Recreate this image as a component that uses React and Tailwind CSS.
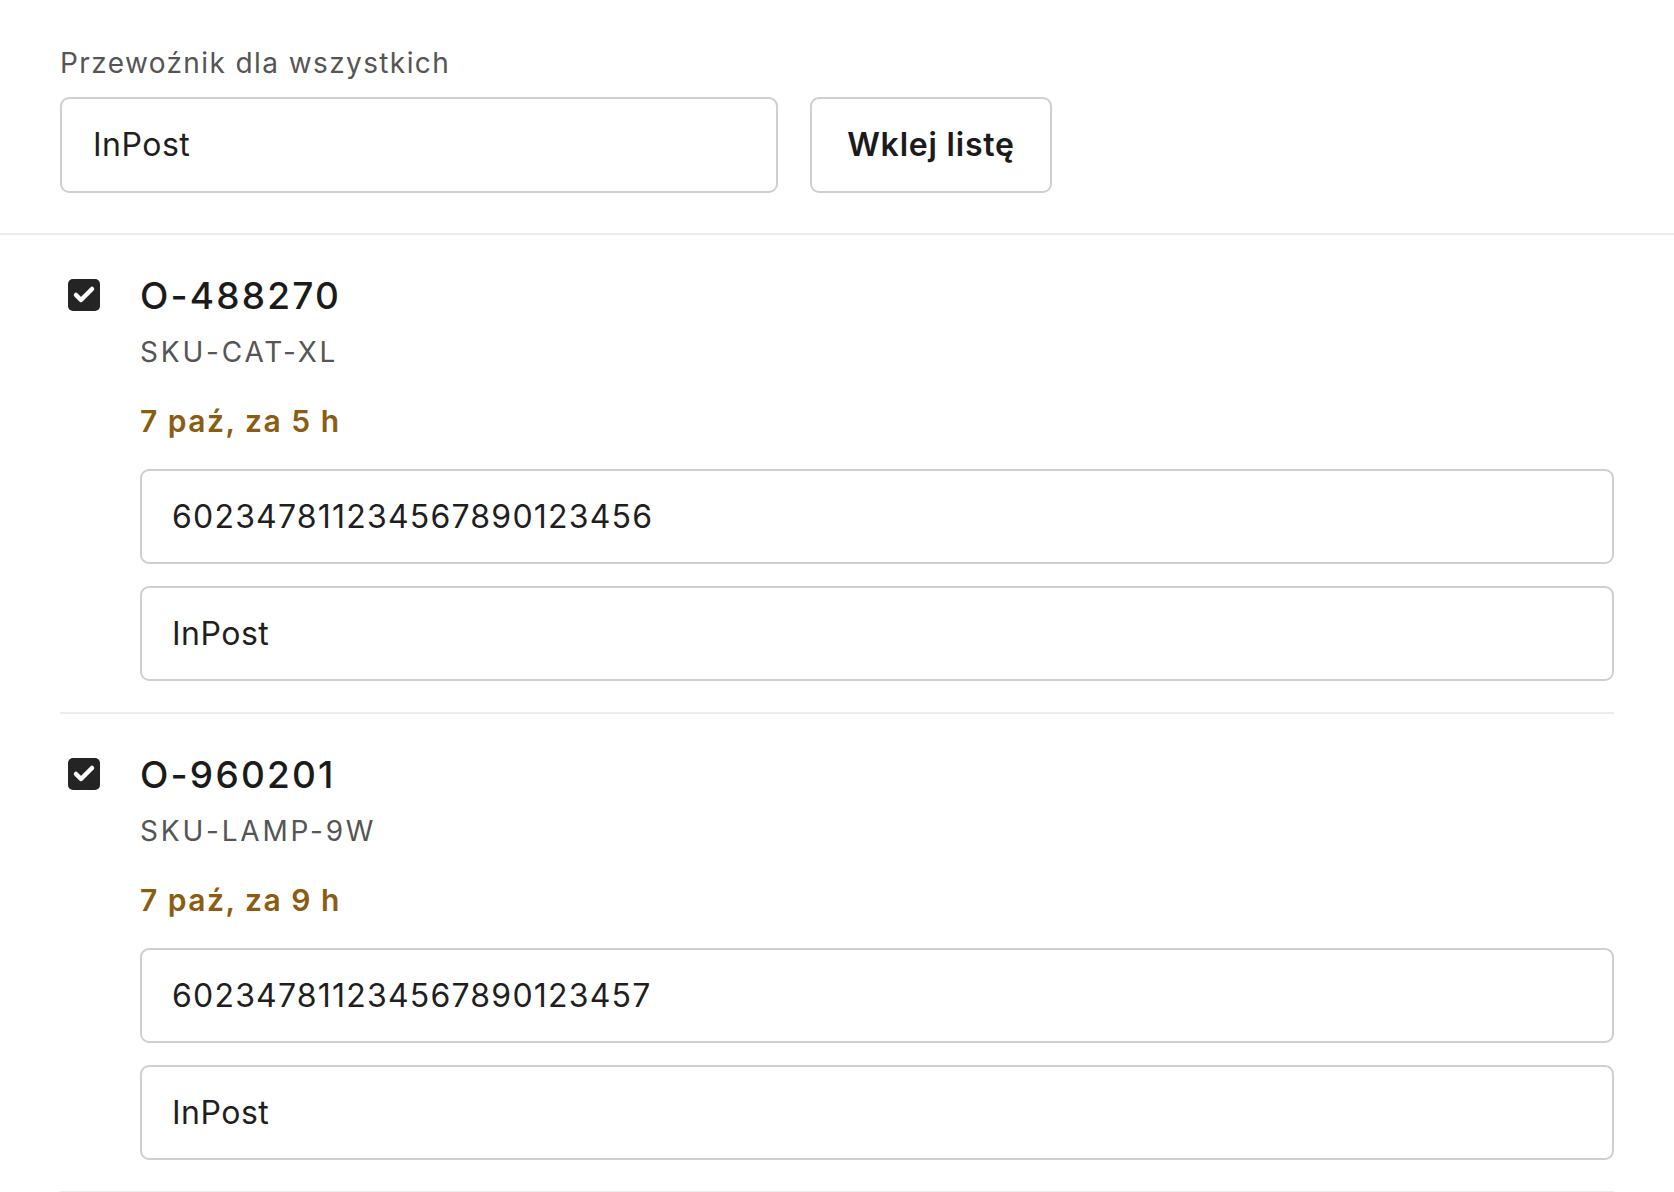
import { Check } from "lucide-react";

const items = [
    { id: "O-488270", sku: "SKU-CAT-XL", due: "7 paź, za 5 h", tracking: "602347811234567890123456", carrier: "InPost" },
    { id: "O-960201", sku: "SKU-LAMP-9W", due: "7 paź, za 9 h", tracking: "602347811234567890123457", carrier: "InPost" },
];

function Field({ value, wide }) {
    return (
        <div
            className={`h-[95px] w-full flex items-center rounded-[9px] border-2 border-[#cfcfcf] bg-white px-[30px] text-[32px] text-[#1f1f1f] ${wide ? "tracking-[1.2px]" : "tracking-[0.5px]"}`}
        >
            {value}
        </div>
    );
}

function OrderRow({ item }) {
    return (
        <div className="flex gap-[40px] pt-[39px] pb-[31px] border-b-2 border-[#ececec]">
            <div className="pt-[5px] pl-[8px]">
                <div className="w-[32px] h-[32px] rounded-[5px] bg-[#242424] flex items-center justify-center">
                    <Check className="w-[24px] h-[24px] text-white" strokeWidth={4.5} />
                </div>
            </div>
            <div className="flex-1 min-w-0">
                <div className="text-[37px] leading-[44px] font-medium tracking-[2.2px] text-[#1b1b1b]">{item.id}</div>
                <div className="mt-[16px] text-[28px] leading-[36px] tracking-[2.8px] text-[#555555]">{item.sku}</div>
                <div className="mt-[33px] text-[30px] leading-[36px] font-semibold tracking-[1.5px] text-[#8a5d12]">{item.due}</div>
                <div className="mt-[30px] flex flex-col gap-[22px]">
                    <Field value={item.tracking} wide />
                    <Field value={item.carrier} />
                </div>
            </div>
        </div>
    );
}

export default function App() {
    return (
        <div className="min-h-screen bg-white" style={{ fontFamily: "Inter, 'Noto Sans', sans-serif" }}>
            <div className="px-[60px] pt-[45px] pb-[40px] border-b-2 border-[#ececec]">
                <div className="text-[28px] leading-[36px] tracking-[1.4px] text-[#555555]">Przewoźnik dla wszystkich</div>
                <div className="mt-[16px] flex gap-[32px]">
                    <div className="w-[718px] h-[96px] flex items-center rounded-[9px] border-2 border-[#cfcfcf] px-[31px] text-[32px] tracking-[0.5px] text-[#1f1f1f]">
                        InPost
                    </div>
                    <button className="w-[242px] h-[96px] rounded-[9px] border-2 border-[#cfcfcf] bg-white text-[32px] font-semibold tracking-[0.8px] text-[#1b1b1b]">
                        Wklej listę
                    </button>
                </div>
            </div>
            <div className="px-[60px]">
                {items.map((item) => (
                    <OrderRow key={item.id} item={item} />
                ))}
            </div>
        </div>
    );
}
